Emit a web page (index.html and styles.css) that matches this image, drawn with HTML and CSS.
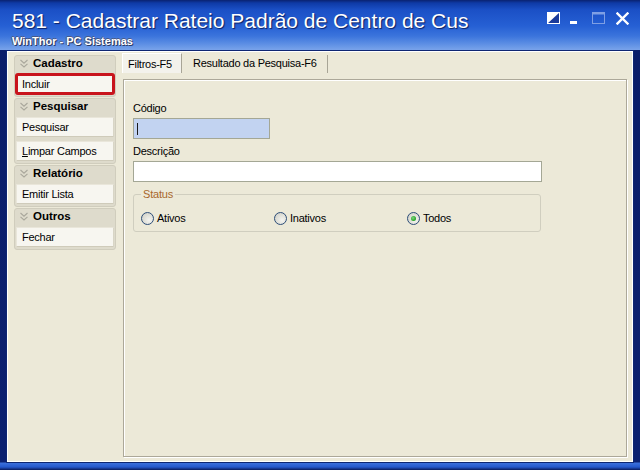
FILE: index.html
```html
<!DOCTYPE html>
<html lang="pt-BR">
<head>
<meta charset="utf-8">
<title>581 - Cadastrar Rateio Padrão de Centro de Custo</title>
<link rel="stylesheet" href="styles.css">
</head>
<body>
<div class="window">
  <header class="titlebar">
    <div class="titles">
      <div class="title">581 - Cadastrar Rateio Padrão de Centro de Cus</div>
      <div class="subtitle">WinThor - PC Sistemas</div>
    </div>
    <div class="wbuttons">
      <svg class="wb wb-restore" width="13" height="12" viewBox="0 0 13 12"><rect x="0.5" y="0.5" width="12" height="11" fill="#1a3a9a" stroke="#fff"/><polygon points="0,0 13,0 0,12" fill="#fff"/></svg>
      <svg class="wb wb-min" width="13" height="12" viewBox="0 0 13 12"><rect x="3" y="9" width="7" height="3" fill="#fff"/></svg>
      <svg class="wb wb-max" width="13" height="12" viewBox="0 0 13 12"><rect x="0.5" y="0.5" width="12" height="11" fill="none" stroke="#7f9fe4"/><rect x="0" y="0" width="13" height="2.5" fill="#7f9fe4"/></svg>
      <svg class="wb wb-close" width="13" height="13" viewBox="0 0 13 13"><path d="M1.5 1.5 L11.5 11.5 M11.5 1.5 L1.5 11.5" stroke="#fff" stroke-width="2.4" stroke-linecap="square"/></svg>
    </div>
  </header>
  <div class="client">
    <nav class="sidebar">
      <section class="group">
        <div class="ghead"><svg class="chev" width="8" height="9" viewBox="0 0 8 9"><path d="M0.5 1 L4 4.2 L7.5 1 M0.5 4.8 L4 8 L7.5 4.8" fill="none" stroke="#a9a79c" stroke-width="1.1"/></svg>Cadastro</div>
        <button class="act highlight">Incluir</button>
      </section>
      <section class="group">
        <div class="ghead"><svg class="chev" width="8" height="9" viewBox="0 0 8 9"><path d="M0.5 1 L4 4.2 L7.5 1 M0.5 4.8 L4 8 L7.5 4.8" fill="none" stroke="#a9a79c" stroke-width="1.1"/></svg>Pesquisar</div>
        <button class="act">Pesquisar</button>
        <button class="act"><u>L</u>impar Campos</button>
      </section>
      <section class="group">
        <div class="ghead"><svg class="chev" width="8" height="9" viewBox="0 0 8 9"><path d="M0.5 1 L4 4.2 L7.5 1 M0.5 4.8 L4 8 L7.5 4.8" fill="none" stroke="#a9a79c" stroke-width="1.1"/></svg>Relatório</div>
        <button class="act">Emitir Lista</button>
      </section>
      <section class="group">
        <div class="ghead"><svg class="chev" width="8" height="9" viewBox="0 0 8 9"><path d="M0.5 1 L4 4.2 L7.5 1 M0.5 4.8 L4 8 L7.5 4.8" fill="none" stroke="#a9a79c" stroke-width="1.1"/></svg>Outros</div>
        <button class="act">Fechar</button>
      </section>
    </nav>
    <div class="tabs">
      <div class="tabstrip">
        <div class="tab active">Filtros-F5</div>
        <div class="tab">Resultado da Pesquisa-F6</div>
      </div>
      <div class="tabpage">
        <div class="panel">
          <div class="lbl">Código</div>
          <div class="input code"><span class="caret"></span></div>
          <div class="lbl">Descrição</div>
          <div class="input desc"></div>
          <fieldset class="status">
            <legend>Status</legend>
            <div class="radios">
              <div class="radio"><span class="circle"></span>Ativos</div>
              <div class="radio"><span class="circle"></span>Inativos</div>
              <div class="radio"><span class="circle checked"></span>Todos</div>
            </div>
          </fieldset>
        </div>
      </div>
    </div>
  </div>
</div>
</body>
</html>
```
FILE: styles.css
```css
* { box-sizing: border-box; }
html, body { margin: 0; padding: 0; }
body {
  background: #0c2272;
  font-family: "Liberation Sans", Arial, sans-serif;
  font-size: 11px;
  color: #000;
}
.window {
  width: 640px;
  height: 470px;
  display: flex;
  flex-direction: column;
  background: linear-gradient(to bottom, #0a1d68 0, #0b2070 calc(100% - 8px), #3c70dc calc(100% - 7px), #2558cc calc(100% - 3px), #0a1a5a 100%);
}
.titlebar {
  height: 50px;
  flex: none;
  display: flex;
  padding: 9px 11px 0 12px;
  background: linear-gradient(to bottom, #0a2270 0, #0e3aa6 3px, #1b50c6 10px, #2660d4 26px, #3b74dc 36px, #5d8fe4 44px, #79a3ea 50px);
  color: #fff;
}
.titles { flex: 1; }
.title {
  font-size: 21px;
  line-height: 24px;
  white-space: nowrap;
  text-shadow: 1px 1px 1px #0b1e62;
}
.subtitle {
  margin-top: 2px;
  font-weight: bold;
  font-size: 11px;
  line-height: 13px;
  text-shadow: 1px 1px 0 #2a3a66, -1px 0 0 #4a5a86, 0 -1px 0 #4a5a86;
}
.wbuttons {
  display: flex;
  align-items: flex-start;
  margin-top: 3px;
}
.wb { display: block; flex: none; }
.wb-min { margin-left: 7px; }
.wb-max { margin-left: 12px; }
.wb-close { margin-left: 11px; }

.client {
  margin: 0 6px;
  height: 413px;
  flex: none;
  display: flex;
  align-items: stretch;
  padding-top: 2px;
  background: #ece9d8;
  border: 1px solid #0e2672;
  box-shadow: inset 1px 1px 0 #fff, inset -1px -1px 0 #fff;
}
.sidebar {
  width: 102px;
  margin: 2px 0 0 7px;
  align-self: flex-start;
  display: flex;
  flex-direction: column;
  gap: 1px;
}
.group {
  display: flex;
  flex-direction: column;
  gap: 4px;
  padding: 0 1px 2px 1px;
  background: #dedbcc;
  border: 1px solid #d0cdbd;
  border-radius: 3px;
}
.ghead {
  height: 18px;
  margin-bottom: -4px;
  padding: 0 0 4px 4px;
  display: flex;
  align-items: center;
  gap: 5px;
  font-weight: bold;
  font-size: 11.5px;
  line-height: 14px;
}
.chev { flex: none; }
.act {
  display: block;
  width: 98px;
  height: 20px;
  margin: 0;
  padding: 0 0 0 5px;
  font: inherit;
  letter-spacing: -0.25px;
  text-align: left;
  color: #000;
  background: #f7f6f0;
  border: 1px solid #e9e6da;
  border-bottom-color: #cfcbba;
  border-right-color: #d8d5c6;
  border-radius: 1px;
}
.act u { text-decoration: underline; }
.highlight {
  outline: 3px solid #c8141c;
  outline-offset: -2px;
  border-radius: 2px;
}

.tabs {
  flex: 1;
  margin-left: 6px;
  display: flex;
  flex-direction: column;
}
.tabstrip {
  height: 20px;
  flex: none;
  display: flex;
  align-items: flex-end;
}
.tab {
  letter-spacing: -0.25px;
  line-height: 16px;
  white-space: nowrap;
}
.tab.active {
  width: 60px;
  height: 20px;
  padding: 2px 0 0 5px;
  background: #f3f2ec;
  border-top: 1px solid #fff;
  border-left: 1px solid #fff;
  border-right: 1px solid #a8a596;
}
.tab:not(.active) {
  width: 146px;
  height: 18px;
  padding: 0 0 0 11px;
  border-right: 1px solid #a8a596;
}
.tabpage {
  flex: 1;
  padding: 6px 6px 5px 1px;
}
.panel {
  height: 100%;
  padding: 22px 0 0 9px;
  border: 1px solid #aca899;
  box-shadow: inset 1px 1px 0 #fff, 1px 1px 0 #fff;
}
.lbl {
  line-height: 13px;
  letter-spacing: -0.25px;
}
.lbl + .input { margin-top: 3px; }
.input + .lbl { margin-top: 6px; }
.input {
  height: 21px;
  border: 1px solid #a4a795;
  background: #fff;
  display: flex;
  align-items: center;
}
.input.code {
  width: 137px;
  background: #c2d3f1;
  padding-left: 3px;
}
.caret {
  width: 1px;
  height: 12px;
  background: #1a1a1a;
}
.input.desc { width: 409px; }
.status {
  width: 408px;
  margin: 6px 0 0 0;
  padding: 11px 7px 6px 7px;
  border: 1px solid #d0cebf;
  border-radius: 3px;
}
.status legend {
  padding: 0 2px;
  line-height: 13px;
  color: #a8672c;
  letter-spacing: -0.2px;
}
.radios {
  display: grid;
  grid-template-columns: 133px 133px 1fr;
}
.radio {
  display: flex;
  align-items: center;
  gap: 3px;
  line-height: 13px;
  letter-spacing: -0.25px;
}
.circle {
  width: 13px;
  height: 13px;
  flex: none;
  border-radius: 50%;
  border: 1px solid #2c4d78;
  background: radial-gradient(circle at 65% 65%, #f4f4f0 0, #dcdcd4 60%, #c8c8c0 100%);
  display: flex;
  align-items: center;
  justify-content: center;
}
.circle.checked::after {
  content: "";
  width: 5px;
  height: 5px;
  border-radius: 50%;
  background: radial-gradient(circle at 40% 40%, #7fd67f 0, #21a121 70%);
}
```
